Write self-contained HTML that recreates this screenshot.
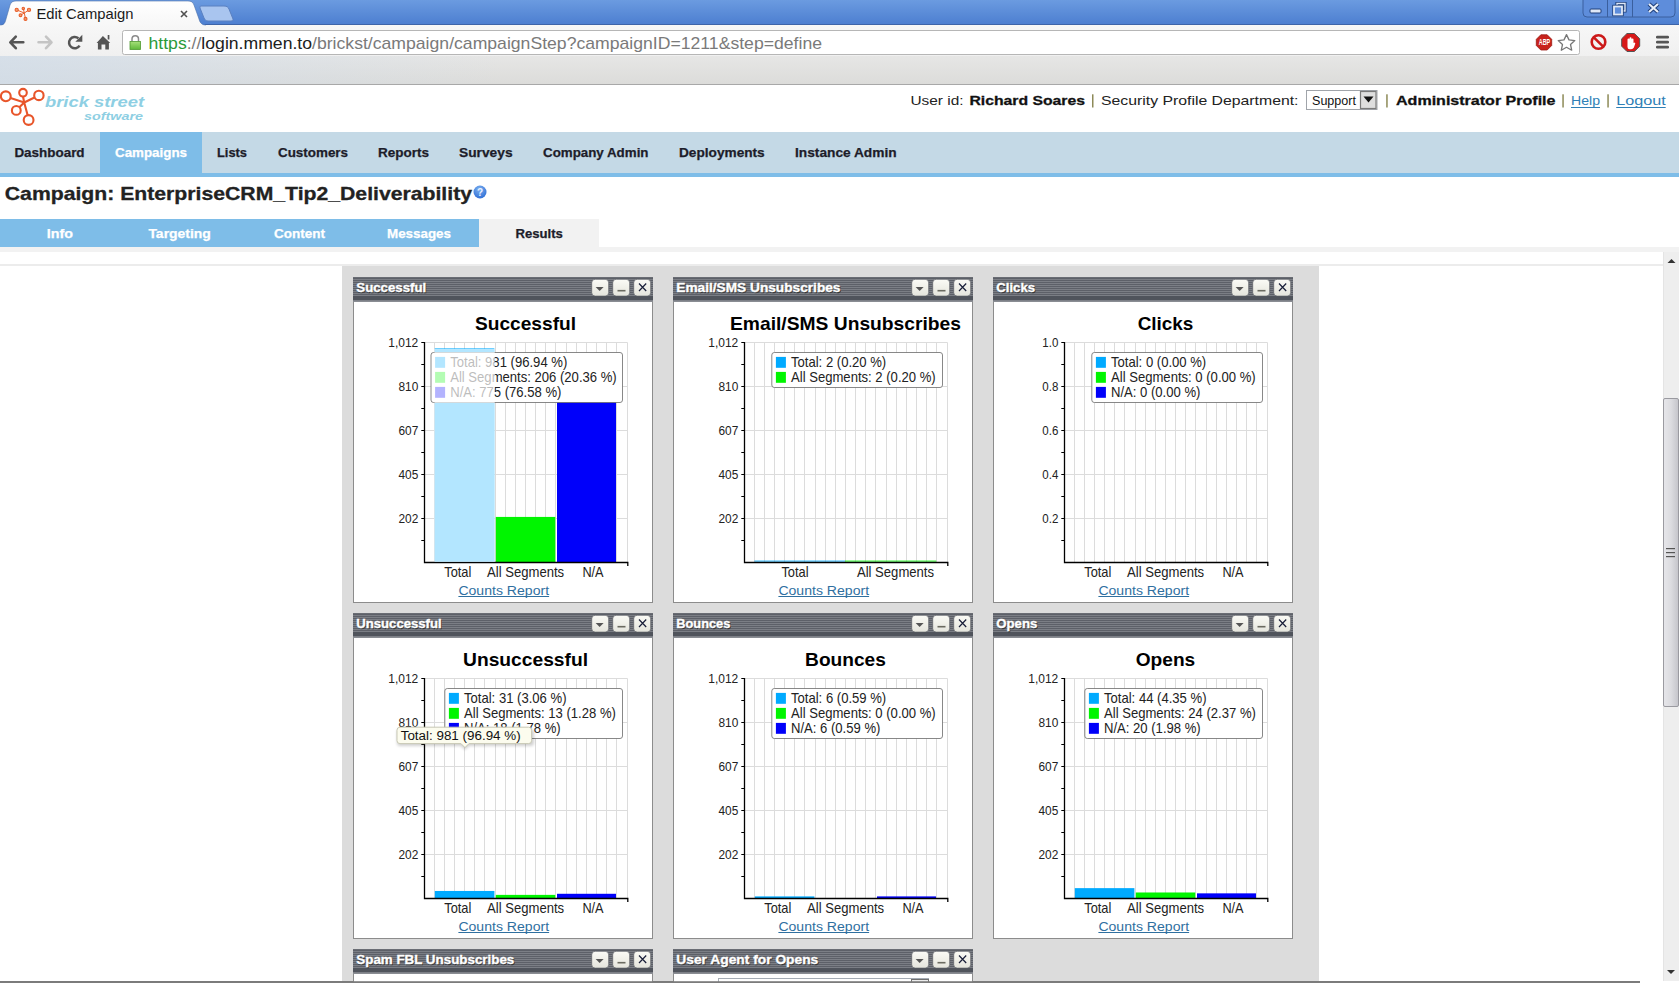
<!DOCTYPE html>
<html><head><meta charset="utf-8"><title>Edit Campaign</title>
<style>html,body{margin:0;padding:0;width:1679px;height:983px;overflow:hidden;background:#fff}svg{display:block}text{white-space:pre}</style>
</head><body>
<svg width="1679" height="983" viewBox="0 0 1679 983">
<defs>
<linearGradient id="tabbar" x1="0" y1="0" x2="0" y2="1"><stop offset="0" stop-color="#6b9be0"/><stop offset="1" stop-color="#4c7ed0"/></linearGradient>
<linearGradient id="tabg" x1="0" y1="0" x2="0" y2="1"><stop offset="0" stop-color="#ffffff"/><stop offset="1" stop-color="#f7f7f7"/></linearGradient>
<linearGradient id="toolg" x1="0" y1="0" x2="0" y2="1"><stop offset="0" stop-color="#f7f7f7"/><stop offset="1" stop-color="#f0f0f0"/></linearGradient>
<linearGradient id="bookg" x1="0" y1="0" x2="0" y2="1"><stop offset="0" stop-color="#e6e6e5"/><stop offset="1" stop-color="#dcdcda"/></linearGradient><linearGradient id="booktint" x1="0" y1="0" x2="1" y2="0"><stop offset="0" stop-color="#cfdcea" stop-opacity="0.7"/><stop offset="0.3" stop-color="#cfdcea" stop-opacity="0"/></linearGradient>
<linearGradient id="lockg" x1="0" y1="0" x2="0" y2="1"><stop offset="0" stop-color="#a6e07a"/><stop offset="1" stop-color="#5fb83a"/></linearGradient>
<pattern id="stripes" width="4" height="2" patternUnits="userSpaceOnUse"><rect width="4" height="1" fill="#5d6068"/><rect y="1" width="4" height="1" fill="#7b7e85"/></pattern>
<linearGradient id="btng" x1="0" y1="0" x2="0" y2="1"><stop offset="0" stop-color="#fbfbf6"/><stop offset="1" stop-color="#e4e4dc"/></linearGradient>
<linearGradient id="thumbg" x1="0" y1="0" x2="1" y2="0"><stop offset="0" stop-color="#e6e6ea"/><stop offset="0.5" stop-color="#dcdce0"/><stop offset="1" stop-color="#c4c4ca"/></linearGradient>
</defs>
<rect x="0" y="0" width="1679" height="25" fill="url(#tabbar)" />
<path d="M1583,0 v13 q0,4 4,4 h84 q4,0 4,-4 v-13" fill="#5e8ddb" stroke="#3a5f9e" stroke-width="1"/>
<line x1="1607.5" y1="0" x2="1607.5" y2="17" stroke="#3a5f9e" stroke-width="1" />
<line x1="1632.5" y1="0" x2="1632.5" y2="17" stroke="#3a5f9e" stroke-width="1" />
<rect x="1590" y="9" width="11" height="4" fill="#dfe8f7" stroke="#1f3f7a" stroke-width="1" rx="1"/>
<path d="M1617,3.5 h8 v7.5 h-8z" fill="none" stroke="#1f3f7a" stroke-width="3.2"/><path d="M1617,3.5 h8 v7.5 h-8z" fill="none" stroke="#dfe8f7" stroke-width="1.4"/>
<rect x="1614" y="6.5" width="8" height="8" fill="#5e8ddb" stroke="#1f3f7a" stroke-width="3.4"/><rect x="1614" y="6.5" width="8" height="8" fill="#5e8ddb" stroke="#dfe8f7" stroke-width="1.8"/>
<path d="M1649,4 l9,8 M1658,4 l-9,8" stroke="#1f3f7a" stroke-width="4.2"/><path d="M1649,4 l9,8 M1658,4 l-9,8" stroke="#e8eef8" stroke-width="2.2"/>
<rect x="0" y="25" width="1679" height="31" fill="url(#toolg)" />
<rect x="0" y="56" width="1679" height="28" fill="url(#bookg)" />
<rect x="0" y="56" width="1679" height="28" fill="url(#booktint)" />
<rect x="0" y="84" width="1679" height="1" fill="#a8a8a8" />
<line x1="205" y1="24.5" x2="1679" y2="24.5" stroke="#3d64a8" stroke-width="1" />
<path d="M0,25.5 C4,25.5 5,23 6,19 L10,5 C11,2 13,1 16,1 L188,1 C191,1 193,2 194,5 L199,19 C200,23 202,25 206,25.5 Z" fill="url(#tabg)"/>
<path d="M0,25 C4,25 5,23 6,19 L10,5 C11,2 13,1 16,1 L188,1 C191,1 193,2 194,5 L199,19 C200,23 202,25 206,25" fill="none" stroke="#4a6ea8" stroke-width="0.6"/>
<rect x="0" y="24.5" width="0.1" height="1" fill="#fff" />
<path d="M201,6 L224,6 C227,6 228,7 229,9 L233,19 C233,20 233,21 231,21 L208,21 C206,21 205,20 204,18 L200,8 C200,7 200,6 201,6Z" fill="#a9c5ef" stroke="#5a80c0" stroke-width="1"/>
<g stroke="#e8602c" fill="#f29a70" stroke-width="1.1"><path d="M16.7,9.9 L24.3,13 L23.3,8.4 M24.3,13 L29,9.9 M24.3,13 L20.5,15.2 M24.3,13 L25.5,18.9" fill="none" stroke-width="1"/><circle cx="16.7" cy="9.9" r="1.6"/><circle cx="23.3" cy="8.4" r="1.2"/><circle cx="29" cy="9.9" r="1.6"/><circle cx="20.5" cy="15.2" r="1.4"/><circle cx="25.5" cy="18.9" r="1.5"/></g>
<text x="36.5" y="18.8" font-family="Liberation Sans" font-size="14.8" font-weight="normal" fill="#1a1a1a" text-anchor="start" textLength="97" lengthAdjust="spacingAndGlyphs" >Edit Campaign</text>
<path d="M181,11 l6,6 M187,11 l-6,6" stroke="#505050" stroke-width="1.6"/>
<path d="M10.5,42.3 h12.8 M15.8,36.6 l-5.5,5.7 l5.5,5.9" fill="none" stroke="#555" stroke-width="2.6" stroke-linecap="round" stroke-linejoin="round"/>
<path d="M38.5,42.3 h12.5 M46,36.6 l5.5,5.7 l-5.5,5.9" fill="none" stroke="#c4c4c4" stroke-width="2.6" stroke-linecap="round" stroke-linejoin="round"/>
<path d="M78.4,38.2 A5.7,5.7 0 1 0 79.6,45.6" fill="none" stroke="#555" stroke-width="2.5"/><path d="M75.3,41.8 L82.3,41.8 L82.3,34.8Z" fill="#555"/>
<path d="M96.6,42.9 L102.9,36 L110.2,42.9 L108.9,42.9 L108.9,49.4 L105.3,49.4 L105.3,44.6 L101.5,44.6 L101.5,49.4 L97.9,49.4 L97.9,42.9Z" fill="#555"/><rect x="107.7" y="35" width="1.7" height="4.5" fill="#555"/>
<rect x="122.5" y="30.5" width="1457" height="24" fill="#ffffff" stroke="#b6b6b6" stroke-width="1" rx="2"/>
<path d="M132,41.5 v-2.6 a3.25,3.25 0 0 1 6.5,0 v2.6" fill="none" stroke="#8a8a8a" stroke-width="1.5"/>
<rect x="130" y="41.5" width="10.5" height="8" fill="url(#lockg)" stroke="#4f9a30" stroke-width="0.8"/>
<text x="148.5" y="48.5" font-family="Liberation Sans" font-size="17" textLength="673.5" lengthAdjust="spacingAndGlyphs"><tspan fill="#2a9a3a">https</tspan><tspan fill="#7a7a7a">://</tspan><tspan fill="#202020">login.mmen.to</tspan><tspan fill="#7a7a7a">/brickst/campaign/campaignStep?campaignID=1211&amp;step=define</tspan></text>
<path d="M1540.8,34.8 h6.4 l4.5,4.5 v6.2 l-4.5,4.5 h-6.4 l-4.5,-4.5 v-6.2z" fill="#c8231c" stroke="#9a1a14" stroke-width="0.8"/>
<text x="1544.5" y="44.7" font-family="Liberation Sans" font-size="8.6" font-weight="bold" fill="#fff" text-anchor="middle" textLength="11.4" lengthAdjust="spacingAndGlyphs" >ABP</text>
<path d="M1566.5,34.6 l2.5,5.3 5.8,0.7 -4.3,3.9 1.2,5.7 -5.2,-2.9 -5.2,2.9 1.2,-5.7 -4.3,-3.9 5.8,-0.7z" fill="#fff" stroke="#777" stroke-width="1.3" stroke-linejoin="round"/>
<circle cx="1598.5" cy="42" r="6.8" fill="#f3f3f3" stroke="#cc1a1a" stroke-width="2.6"/><path d="M1593.8,37.3 L1603.2,46.7" stroke="#cc1a1a" stroke-width="2.6"/>
<path d="M1627,33.5 h7.4 l5.3,5.3 v7.4 l-5.3,5.3 h-7.4 l-5.3,-5.3 v-7.4z" fill="#d81a1a" stroke="#555" stroke-width="1"/>
<path d="M1627.5,44 v-4.5 a1,1 0 0 1 2,0 v-1.2 a1,1 0 0 1 2,0 v1.2 a1,1 0 0 1 2,0 v3.5 a1,1 0 0 1 1.8,0.6 l-1.4,4 q-0.9,1.7 -2.8,1.7 h-1.5 q-2.1,0 -2.1,-2.3z" fill="#fff"/>
<rect x="1656" y="35.8" width="13" height="2.6" fill="#555" rx="1.2"/>
<rect x="1656" y="40.8" width="13" height="2.6" fill="#555" rx="1.2"/>
<rect x="1656" y="45.8" width="13" height="2.6" fill="#555" rx="1.2"/>
<g stroke="#e8552a" fill="none" stroke-width="2.1"><circle cx="5.8" cy="96.3" r="4.9"/><circle cx="23" cy="92.7" r="3.8"/><circle cx="38.9" cy="95.4" r="4.7"/><circle cx="16.3" cy="110.4" r="4.4"/><circle cx="28.6" cy="120" r="4.9"/><path d="M10.5,98 L24.2,102.5 L23,96.5 M24.2,102.5 L34.5,97.5 M24.2,102.5 L19.3,107.3 M24.2,102.5 L27.6,115"/></g>
<text x="45" y="107.3" font-family="Liberation Sans" font-size="15.5" font-weight="bold" fill="#8ecfe3" text-anchor="start" textLength="99" lengthAdjust="spacingAndGlyphs" font-style="italic">brick street</text>
<text x="84" y="119.7" font-family="Liberation Sans" font-size="11" font-weight="bold" fill="#8ecfe3" text-anchor="start" textLength="59" lengthAdjust="spacingAndGlyphs" font-style="italic">software</text>
<text x="910.5" y="105" font-family="Liberation Sans" font-size="13" font-weight="normal" fill="#222" text-anchor="start" textLength="53" lengthAdjust="spacingAndGlyphs" >User id:</text>
<text x="969.5" y="105" font-family="Liberation Sans" font-size="13" font-weight="bold" fill="#111" text-anchor="start" textLength="115.5" lengthAdjust="spacingAndGlyphs" stroke="#111" stroke-width="0.3">Richard Soares</text>
<rect x="1092.0" y="94.3" width="1.5" height="13.2" fill="#8d8a58" />
<text x="1101" y="105" font-family="Liberation Sans" font-size="13" font-weight="normal" fill="#222" text-anchor="start" textLength="197.5" lengthAdjust="spacingAndGlyphs" >Security Profile Department:</text>
<rect x="1306.5" y="90.5" width="70.5" height="19" fill="#fff" stroke="#a0a4aa" stroke-width="1"/>
<text x="1312" y="105" font-family="Liberation Sans" font-size="12.5" font-weight="normal" fill="#111" text-anchor="start" textLength="44" lengthAdjust="spacingAndGlyphs" >Support</text>
<rect x="1360.5" y="91.5" width="15.5" height="17" fill="#dedede" stroke="#7a7a7a" stroke-width="1.2"/>
<path d="M1363.5,96.5 h10 l-5,6z" fill="#111"/>
<rect x="1386.2" y="94.3" width="1.5" height="13.2" fill="#8d8a58" />
<text x="1396" y="105" font-family="Liberation Sans" font-size="13" font-weight="bold" fill="#111" text-anchor="start" textLength="159.5" lengthAdjust="spacingAndGlyphs" stroke="#111" stroke-width="0.3">Administrator Profile</text>
<rect x="1562.3" y="94.3" width="1.5" height="13.2" fill="#8d8a58" />
<text x="1571" y="105" font-family="Liberation Sans" font-size="13" font-weight="normal" fill="#2f7fb6" text-anchor="start" textLength="29" lengthAdjust="spacingAndGlyphs" >Help</text>
<rect x="1571" y="107" width="29" height="1" fill="#2f7fb6" />
<rect x="1607.3" y="94.3" width="1.5" height="13.2" fill="#8d8a58" />
<text x="1616.2" y="105" font-family="Liberation Sans" font-size="13" font-weight="normal" fill="#2f7fb6" text-anchor="start" textLength="49.5" lengthAdjust="spacingAndGlyphs" >Logout</text>
<rect x="1616.2" y="107" width="49.5" height="1" fill="#2f7fb6" />
<rect x="0" y="132" width="1679" height="41" fill="#c4d9e6" />
<rect x="0" y="173" width="1679" height="4" fill="#7ebde8" />
<rect x="100" y="132" width="102" height="41" fill="#7ebde8" />
<text x="14.4" y="157" font-family="Liberation Sans" font-size="12.5" font-weight="bold" fill="#1d1d2a" text-anchor="start" textLength="70.2" lengthAdjust="spacingAndGlyphs" stroke="#1d1d2a" stroke-width="0.25">Dashboard</text>
<text x="115" y="157" font-family="Liberation Sans" font-size="12.5" font-weight="bold" fill="#fff" text-anchor="start" textLength="72" lengthAdjust="spacingAndGlyphs" stroke="#fff" stroke-width="0.25">Campaigns</text>
<text x="217" y="157" font-family="Liberation Sans" font-size="12.5" font-weight="bold" fill="#1d1d2a" text-anchor="start" textLength="30" lengthAdjust="spacingAndGlyphs" stroke="#1d1d2a" stroke-width="0.25">Lists</text>
<text x="278" y="157" font-family="Liberation Sans" font-size="12.5" font-weight="bold" fill="#1d1d2a" text-anchor="start" textLength="70" lengthAdjust="spacingAndGlyphs" stroke="#1d1d2a" stroke-width="0.25">Customers</text>
<text x="378" y="157" font-family="Liberation Sans" font-size="12.5" font-weight="bold" fill="#1d1d2a" text-anchor="start" textLength="51" lengthAdjust="spacingAndGlyphs" stroke="#1d1d2a" stroke-width="0.25">Reports</text>
<text x="459" y="157" font-family="Liberation Sans" font-size="12.5" font-weight="bold" fill="#1d1d2a" text-anchor="start" textLength="53.6" lengthAdjust="spacingAndGlyphs" stroke="#1d1d2a" stroke-width="0.25">Surveys</text>
<text x="543" y="157" font-family="Liberation Sans" font-size="12.5" font-weight="bold" fill="#1d1d2a" text-anchor="start" textLength="105.5" lengthAdjust="spacingAndGlyphs" stroke="#1d1d2a" stroke-width="0.25">Company Admin</text>
<text x="679" y="157" font-family="Liberation Sans" font-size="12.5" font-weight="bold" fill="#1d1d2a" text-anchor="start" textLength="85.7" lengthAdjust="spacingAndGlyphs" stroke="#1d1d2a" stroke-width="0.25">Deployments</text>
<text x="795" y="157" font-family="Liberation Sans" font-size="12.5" font-weight="bold" fill="#1d1d2a" text-anchor="start" textLength="101.6" lengthAdjust="spacingAndGlyphs" stroke="#1d1d2a" stroke-width="0.25">Instance Admin</text>
<text x="4.8" y="200" font-family="Liberation Sans" font-size="18.5" font-weight="bold" fill="#222" text-anchor="start" textLength="467.2" lengthAdjust="spacingAndGlyphs" stroke="#222" stroke-width="0.3">Campaign: EnterpriseCRM_Tip2_Deliverability</text>
<defs><radialGradient id="helpg" cx="0.45" cy="0.3" r="0.7"><stop offset="0" stop-color="#7fb2f0"/><stop offset="1" stop-color="#2f6fd6"/></radialGradient></defs>
<circle cx="480" cy="192" r="6.5" fill="url(#helpg)"/>
<text x="480" y="196.2" font-family="Liberation Sans" font-size="10" font-weight="bold" fill="#eaf2ff" text-anchor="middle" >?</text>
<rect x="0" y="219" width="479" height="28" fill="#7ebde8" />
<rect x="479" y="219" width="120" height="28" fill="#f2f2f2" />
<text x="46.7" y="237.8" font-family="Liberation Sans" font-size="12.5" font-weight="bold" fill="#fff" text-anchor="start" textLength="26.2" lengthAdjust="spacingAndGlyphs" stroke="#fff" stroke-width="0.25">Info</text>
<text x="148.4" y="237.8" font-family="Liberation Sans" font-size="12.5" font-weight="bold" fill="#fff" text-anchor="start" textLength="62.5" lengthAdjust="spacingAndGlyphs" stroke="#fff" stroke-width="0.25">Targeting</text>
<text x="274" y="237.8" font-family="Liberation Sans" font-size="12.5" font-weight="bold" fill="#fff" text-anchor="start" textLength="51" lengthAdjust="spacingAndGlyphs" stroke="#fff" stroke-width="0.25">Content</text>
<text x="387" y="237.8" font-family="Liberation Sans" font-size="12.5" font-weight="bold" fill="#fff" text-anchor="start" textLength="64" lengthAdjust="spacingAndGlyphs" stroke="#fff" stroke-width="0.25">Messages</text>
<text x="515.5" y="237.8" font-family="Liberation Sans" font-size="12.5" font-weight="bold" fill="#1d1d2a" text-anchor="start" textLength="47.3" lengthAdjust="spacingAndGlyphs" stroke="#1d1d2a" stroke-width="0.25">Results</text>
<rect x="0" y="247" width="1679" height="5" fill="#f2f2f2" />
<rect x="0" y="264" width="1663" height="2" fill="#ececec" />
<rect x="342" y="266" width="977" height="717" fill="#dcdcdc" />
<rect x="1663" y="252" width="16" height="729" fill="#eeeeee" />
<rect x="1663" y="252" width="1" height="729" fill="#e4e4e4" />
<path d="M1667.5,263 l4,-4 l4,4z" fill="#333"/>
<path d="M1667,970 l4,4 l4,-4z" fill="#333"/>
<rect x="1663.5" y="398.5" width="15" height="308" fill="url(#thumbg)" stroke="#9a9aa0" stroke-width="1" rx="1.5"/>
<rect x="1666" y="548.0" width="9" height="1.2" fill="#555" />
<rect x="1666" y="552.0" width="9" height="1.2" fill="#555" />
<rect x="1666" y="556.0" width="9" height="1.2" fill="#555" />
<rect x="0" y="981" width="1640" height="2" fill="#7c7c7c" />
<rect x="353" y="277" width="300" height="25" fill="url(#stripes)" />
<rect x="353" y="277" width="300" height="1" fill="#6a6d74" />
<rect x="353" y="296" width="300" height="4" fill="#50545c" />
<rect x="353" y="300" width="300" height="1" fill="#7d8087" />
<rect x="353" y="301" width="300" height="1" fill="#8a8d93" />
<text x="357" y="292.7" font-family="Liberation Sans" font-size="12.5" font-weight="bold" fill="#2a2c30" text-anchor="start" textLength="70" lengthAdjust="spacingAndGlyphs" opacity="0.8" stroke="#2a2c30" stroke-width="0.5">Successful</text>
<text x="356.3" y="291.7" font-family="Liberation Sans" font-size="12.5" font-weight="bold" fill="#ffffff" text-anchor="start" textLength="70" lengthAdjust="spacingAndGlyphs" stroke="#ffffff" stroke-width="0.35">Successful</text>
<rect x="591.7" y="279.3" width="17" height="16.8" fill="url(#btng)" rx="3.5" stroke="#5a5d64" stroke-width="0.7"/>
<path d="M595.6,287 h8 l-4,4z" fill="#555"/>
<rect x="612.7" y="279.3" width="17" height="16.8" fill="url(#btng)" rx="3.5" stroke="#5a5d64" stroke-width="0.7"/>
<rect x="617.5" y="289.9" width="8" height="1.6" fill="#6a6a60" />
<rect x="633.7" y="279.3" width="17" height="16.8" fill="url(#btng)" rx="3.5" stroke="#5a5d64" stroke-width="0.7"/>
<path d="M639,283.5 l7.2,7.5 M646.2,283.5 l-7.2,7.5" stroke="#1a1f3a" stroke-width="1.2"/>
<rect x="353" y="302" width="300" height="301" fill="#8c8c8c" />
<rect x="354" y="302" width="298" height="300" fill="#ffffff" />
<rect x="673" y="277" width="300" height="25" fill="url(#stripes)" />
<rect x="673" y="277" width="300" height="1" fill="#6a6d74" />
<rect x="673" y="296" width="300" height="4" fill="#50545c" />
<rect x="673" y="300" width="300" height="1" fill="#7d8087" />
<rect x="673" y="301" width="300" height="1" fill="#8a8d93" />
<text x="677" y="292.7" font-family="Liberation Sans" font-size="12.5" font-weight="bold" fill="#2a2c30" text-anchor="start" textLength="164.2" lengthAdjust="spacingAndGlyphs" opacity="0.8" stroke="#2a2c30" stroke-width="0.5">Email/SMS Unsubscribes</text>
<text x="676.3" y="291.7" font-family="Liberation Sans" font-size="12.5" font-weight="bold" fill="#ffffff" text-anchor="start" textLength="164.2" lengthAdjust="spacingAndGlyphs" stroke="#ffffff" stroke-width="0.35">Email/SMS Unsubscribes</text>
<rect x="911.7" y="279.3" width="17" height="16.8" fill="url(#btng)" rx="3.5" stroke="#5a5d64" stroke-width="0.7"/>
<path d="M915.6,287 h8 l-4,4z" fill="#555"/>
<rect x="932.7" y="279.3" width="17" height="16.8" fill="url(#btng)" rx="3.5" stroke="#5a5d64" stroke-width="0.7"/>
<rect x="937.5" y="289.9" width="8" height="1.6" fill="#6a6a60" />
<rect x="953.7" y="279.3" width="17" height="16.8" fill="url(#btng)" rx="3.5" stroke="#5a5d64" stroke-width="0.7"/>
<path d="M959,283.5 l7.2,7.5 M966.2,283.5 l-7.2,7.5" stroke="#1a1f3a" stroke-width="1.2"/>
<rect x="673" y="302" width="300" height="301" fill="#8c8c8c" />
<rect x="674" y="302" width="298" height="300" fill="#ffffff" />
<rect x="993" y="277" width="300" height="25" fill="url(#stripes)" />
<rect x="993" y="277" width="300" height="1" fill="#6a6d74" />
<rect x="993" y="296" width="300" height="4" fill="#50545c" />
<rect x="993" y="300" width="300" height="1" fill="#7d8087" />
<rect x="993" y="301" width="300" height="1" fill="#8a8d93" />
<text x="997" y="292.7" font-family="Liberation Sans" font-size="12.5" font-weight="bold" fill="#2a2c30" text-anchor="start" textLength="38.7" lengthAdjust="spacingAndGlyphs" opacity="0.8" stroke="#2a2c30" stroke-width="0.5">Clicks</text>
<text x="996.3" y="291.7" font-family="Liberation Sans" font-size="12.5" font-weight="bold" fill="#ffffff" text-anchor="start" textLength="38.7" lengthAdjust="spacingAndGlyphs" stroke="#ffffff" stroke-width="0.35">Clicks</text>
<rect x="1231.7" y="279.3" width="17" height="16.8" fill="url(#btng)" rx="3.5" stroke="#5a5d64" stroke-width="0.7"/>
<path d="M1235.6,287 h8 l-4,4z" fill="#555"/>
<rect x="1252.7" y="279.3" width="17" height="16.8" fill="url(#btng)" rx="3.5" stroke="#5a5d64" stroke-width="0.7"/>
<rect x="1257.5" y="289.9" width="8" height="1.6" fill="#6a6a60" />
<rect x="1273.7" y="279.3" width="17" height="16.8" fill="url(#btng)" rx="3.5" stroke="#5a5d64" stroke-width="0.7"/>
<path d="M1279,283.5 l7.2,7.5 M1286.2,283.5 l-7.2,7.5" stroke="#1a1f3a" stroke-width="1.2"/>
<rect x="993" y="302" width="300" height="301" fill="#8c8c8c" />
<rect x="994" y="302" width="298" height="300" fill="#ffffff" />
<text x="525.5" y="329.6" font-family="Liberation Sans" font-size="19" font-weight="bold" fill="#000" text-anchor="middle" textLength="101" lengthAdjust="spacingAndGlyphs" >Successful</text>
<path d="M434.50,342.5 V562.5 M444.50,342.5 V562.5 M454.50,342.5 V562.5 M464.50,342.5 V562.5 M474.50,342.5 V562.5 M484.50,342.5 V562.5 M495.50,342.5 V562.5 M505.50,342.5 V562.5 M515.50,342.5 V562.5 M525.50,342.5 V562.5 M535.50,342.5 V562.5 M545.50,342.5 V562.5 M555.50,342.5 V562.5 M566.50,342.5 V562.5 M576.50,342.5 V562.5 M586.50,342.5 V562.5 M596.50,342.5 V562.5 M606.50,342.5 V562.5 M616.50,342.5 V562.5 M627.50,342.5 V562.5 M424.5,342.5 H627.5 M424.5,386.5 H627.5 M424.5,430.5 H627.5 M424.5,474.5 H627.5 M424.5,518.5 H627.5" stroke="#dcdcdc" stroke-width="1" fill="none"/>
<rect x="434.8" y="348.43913043478256" width="59.60000000000001" height="214.06086956521742" fill="#00aaff" />
<rect x="495.8" y="516.9173913043478" width="59.5" height="45.58260869565217" fill="#00f500" />
<rect x="557" y="393.2217391304348" width="59" height="169.27826086956523" fill="#0000fa" />
<path d="M424.5,342.0 V562.5 H627.8 V566.0" stroke="#000" stroke-width="1.3" fill="none"/>
<path d="M421.3,342.5 H424.5 M421.3,364.5 H424.5 M421.3,386.5 H424.5 M421.3,408.5 H424.5 M421.3,430.5 H424.5 M421.3,452.5 H424.5 M421.3,474.5 H424.5 M421.3,496.5 H424.5 M421.3,518.5 H424.5 M421.3,540.5 H424.5" stroke="#000" stroke-width="1.2"/>
<text x="418.3" y="347.09999999999997" font-family="Liberation Sans" font-size="13.6" font-weight="normal" fill="#222" text-anchor="end" textLength="30" lengthAdjust="spacingAndGlyphs" >1,012</text>
<text x="418.3" y="391.09999999999997" font-family="Liberation Sans" font-size="13.6" font-weight="normal" fill="#222" text-anchor="end" textLength="19.8" lengthAdjust="spacingAndGlyphs" >810</text>
<text x="418.3" y="435.09999999999997" font-family="Liberation Sans" font-size="13.6" font-weight="normal" fill="#222" text-anchor="end" textLength="19.8" lengthAdjust="spacingAndGlyphs" >607</text>
<text x="418.3" y="479.09999999999997" font-family="Liberation Sans" font-size="13.6" font-weight="normal" fill="#222" text-anchor="end" textLength="19.8" lengthAdjust="spacingAndGlyphs" >405</text>
<text x="418.3" y="523.1" font-family="Liberation Sans" font-size="13.6" font-weight="normal" fill="#222" text-anchor="end" textLength="19.8" lengthAdjust="spacingAndGlyphs" >202</text>
<text x="457.8" y="576.7" font-family="Liberation Sans" font-size="14.2" font-weight="normal" fill="#222" text-anchor="middle" textLength="27.2" lengthAdjust="spacingAndGlyphs" >Total</text>
<text x="525.6" y="576.7" font-family="Liberation Sans" font-size="14.2" font-weight="normal" fill="#222" text-anchor="middle" textLength="77.1" lengthAdjust="spacingAndGlyphs" >All Segments</text>
<text x="593" y="576.7" font-family="Liberation Sans" font-size="14.2" font-weight="normal" fill="#222" text-anchor="middle" textLength="21.2" lengthAdjust="spacingAndGlyphs" >N/A</text>
<rect x="431.0" y="352.5" width="191.5" height="50" rx="2.5" fill="#fff" stroke="#6a6a6a" stroke-width="0.8"/>
<rect x="435.1" y="356.9" width="10" height="10.9" fill="#00aaff" />
<text x="450.2" y="366.9" font-family="Liberation Sans" font-size="14.2" font-weight="normal" fill="#222" text-anchor="start" textLength="117.1" lengthAdjust="spacingAndGlyphs" >Total: 981 (96.94 %)</text>
<rect x="435.1" y="371.9" width="10" height="10.9" fill="#00f500" />
<text x="450.2" y="381.9" font-family="Liberation Sans" font-size="14.2" font-weight="normal" fill="#222" text-anchor="start" textLength="166.5" lengthAdjust="spacingAndGlyphs" >All Segments: 206 (20.36 %)</text>
<rect x="435.1" y="386.9" width="10" height="10.9" fill="#0000fa" />
<text x="450.2" y="396.9" font-family="Liberation Sans" font-size="14.2" font-weight="normal" fill="#222" text-anchor="start" textLength="111.2" lengthAdjust="spacingAndGlyphs" >N/A: 775 (76.58 %)</text>
<text x="458.4" y="594.8" font-family="Liberation Sans" font-size="12.5" font-weight="normal" fill="#2f6f9f" text-anchor="start" textLength="90.7" lengthAdjust="spacingAndGlyphs" >Counts Report</text>
<rect x="458.4" y="596" width="90.7" height="1" fill="#2f6f9f" />
<text x="845.5" y="329.6" font-family="Liberation Sans" font-size="19" font-weight="bold" fill="#000" text-anchor="middle" textLength="231" lengthAdjust="spacingAndGlyphs" >Email/SMS Unsubscribes</text>
<path d="M754.50,342.5 V562.5 M764.50,342.5 V562.5 M774.50,342.5 V562.5 M784.50,342.5 V562.5 M794.50,342.5 V562.5 M804.50,342.5 V562.5 M815.50,342.5 V562.5 M825.50,342.5 V562.5 M835.50,342.5 V562.5 M845.50,342.5 V562.5 M855.50,342.5 V562.5 M865.50,342.5 V562.5 M875.50,342.5 V562.5 M886.50,342.5 V562.5 M896.50,342.5 V562.5 M906.50,342.5 V562.5 M916.50,342.5 V562.5 M926.50,342.5 V562.5 M936.50,342.5 V562.5 M947.50,342.5 V562.5 M744.5,342.5 H947.5 M744.5,386.5 H947.5 M744.5,430.5 H947.5 M744.5,474.5 H947.5 M744.5,518.5 H947.5" stroke="#dcdcdc" stroke-width="1" fill="none"/>
<rect x="754.4" y="560.3" width="90.6" height="2" fill="#00aaff" opacity="0.55"/>
<rect x="845" y="560.3" width="91.30000000000001" height="2" fill="#00f500" opacity="0.55"/>
<path d="M744.5,342.0 V562.5 H947.8 V566.0" stroke="#000" stroke-width="1.3" fill="none"/>
<path d="M741.3,342.5 H744.5 M741.3,364.5 H744.5 M741.3,386.5 H744.5 M741.3,408.5 H744.5 M741.3,430.5 H744.5 M741.3,452.5 H744.5 M741.3,474.5 H744.5 M741.3,496.5 H744.5 M741.3,518.5 H744.5 M741.3,540.5 H744.5" stroke="#000" stroke-width="1.2"/>
<text x="738.3" y="347.09999999999997" font-family="Liberation Sans" font-size="13.6" font-weight="normal" fill="#222" text-anchor="end" textLength="30" lengthAdjust="spacingAndGlyphs" >1,012</text>
<text x="738.3" y="391.09999999999997" font-family="Liberation Sans" font-size="13.6" font-weight="normal" fill="#222" text-anchor="end" textLength="19.8" lengthAdjust="spacingAndGlyphs" >810</text>
<text x="738.3" y="435.09999999999997" font-family="Liberation Sans" font-size="13.6" font-weight="normal" fill="#222" text-anchor="end" textLength="19.8" lengthAdjust="spacingAndGlyphs" >607</text>
<text x="738.3" y="479.09999999999997" font-family="Liberation Sans" font-size="13.6" font-weight="normal" fill="#222" text-anchor="end" textLength="19.8" lengthAdjust="spacingAndGlyphs" >405</text>
<text x="738.3" y="523.1" font-family="Liberation Sans" font-size="13.6" font-weight="normal" fill="#222" text-anchor="end" textLength="19.8" lengthAdjust="spacingAndGlyphs" >202</text>
<text x="795" y="576.7" font-family="Liberation Sans" font-size="14.2" font-weight="normal" fill="#222" text-anchor="middle" textLength="27.2" lengthAdjust="spacingAndGlyphs" >Total</text>
<text x="895.5" y="576.7" font-family="Liberation Sans" font-size="14.2" font-weight="normal" fill="#222" text-anchor="middle" textLength="77.1" lengthAdjust="spacingAndGlyphs" >All Segments</text>
<rect x="771.8" y="352.5" width="170.7" height="35" rx="2.5" fill="#fff" stroke="#6a6a6a" stroke-width="0.8"/>
<rect x="775.8999999999999" y="356.9" width="10" height="10.9" fill="#00aaff" />
<text x="790.9999999999999" y="366.9" font-family="Liberation Sans" font-size="14.2" font-weight="normal" fill="#222" text-anchor="start" textLength="95.2" lengthAdjust="spacingAndGlyphs" >Total: 2 (0.20 %)</text>
<rect x="775.8999999999999" y="371.9" width="10" height="10.9" fill="#00f500" />
<text x="790.9999999999999" y="381.9" font-family="Liberation Sans" font-size="14.2" font-weight="normal" fill="#222" text-anchor="start" textLength="144.7" lengthAdjust="spacingAndGlyphs" >All Segments: 2 (0.20 %)</text>
<text x="778.4" y="594.8" font-family="Liberation Sans" font-size="12.5" font-weight="normal" fill="#2f6f9f" text-anchor="start" textLength="90.7" lengthAdjust="spacingAndGlyphs" >Counts Report</text>
<rect x="778.4" y="596" width="90.7" height="1" fill="#2f6f9f" />
<text x="1165.5" y="329.6" font-family="Liberation Sans" font-size="19" font-weight="bold" fill="#000" text-anchor="middle" textLength="55.7" lengthAdjust="spacingAndGlyphs" >Clicks</text>
<path d="M1074.50,342.5 V562.5 M1084.50,342.5 V562.5 M1094.50,342.5 V562.5 M1104.50,342.5 V562.5 M1114.50,342.5 V562.5 M1124.50,342.5 V562.5 M1135.50,342.5 V562.5 M1145.50,342.5 V562.5 M1155.50,342.5 V562.5 M1165.50,342.5 V562.5 M1175.50,342.5 V562.5 M1185.50,342.5 V562.5 M1195.50,342.5 V562.5 M1206.50,342.5 V562.5 M1216.50,342.5 V562.5 M1226.50,342.5 V562.5 M1236.50,342.5 V562.5 M1246.50,342.5 V562.5 M1256.50,342.5 V562.5 M1267.50,342.5 V562.5 M1064.5,342.5 H1267.5 M1064.5,386.5 H1267.5 M1064.5,430.5 H1267.5 M1064.5,474.5 H1267.5 M1064.5,518.5 H1267.5" stroke="#dcdcdc" stroke-width="1" fill="none"/>
<path d="M1064.5,342.0 V562.5 H1267.8 V566.0" stroke="#000" stroke-width="1.3" fill="none"/>
<path d="M1061.3,342.5 H1064.5 M1061.3,364.5 H1064.5 M1061.3,386.5 H1064.5 M1061.3,408.5 H1064.5 M1061.3,430.5 H1064.5 M1061.3,452.5 H1064.5 M1061.3,474.5 H1064.5 M1061.3,496.5 H1064.5 M1061.3,518.5 H1064.5 M1061.3,540.5 H1064.5" stroke="#000" stroke-width="1.2"/>
<text x="1058.3" y="347.09999999999997" font-family="Liberation Sans" font-size="13.6" font-weight="normal" fill="#222" text-anchor="end" textLength="16" lengthAdjust="spacingAndGlyphs" >1.0</text>
<text x="1058.3" y="391.09999999999997" font-family="Liberation Sans" font-size="13.6" font-weight="normal" fill="#222" text-anchor="end" textLength="16" lengthAdjust="spacingAndGlyphs" >0.8</text>
<text x="1058.3" y="435.09999999999997" font-family="Liberation Sans" font-size="13.6" font-weight="normal" fill="#222" text-anchor="end" textLength="16" lengthAdjust="spacingAndGlyphs" >0.6</text>
<text x="1058.3" y="479.09999999999997" font-family="Liberation Sans" font-size="13.6" font-weight="normal" fill="#222" text-anchor="end" textLength="16" lengthAdjust="spacingAndGlyphs" >0.4</text>
<text x="1058.3" y="523.1" font-family="Liberation Sans" font-size="13.6" font-weight="normal" fill="#222" text-anchor="end" textLength="16" lengthAdjust="spacingAndGlyphs" >0.2</text>
<text x="1097.8" y="576.7" font-family="Liberation Sans" font-size="14.2" font-weight="normal" fill="#222" text-anchor="middle" textLength="27.2" lengthAdjust="spacingAndGlyphs" >Total</text>
<text x="1165.6" y="576.7" font-family="Liberation Sans" font-size="14.2" font-weight="normal" fill="#222" text-anchor="middle" textLength="77.1" lengthAdjust="spacingAndGlyphs" >All Segments</text>
<text x="1233" y="576.7" font-family="Liberation Sans" font-size="14.2" font-weight="normal" fill="#222" text-anchor="middle" textLength="21.2" lengthAdjust="spacingAndGlyphs" >N/A</text>
<rect x="1091.8" y="352.5" width="170.7" height="50" rx="2.5" fill="#fff" stroke="#6a6a6a" stroke-width="0.8"/>
<rect x="1095.8999999999999" y="356.9" width="10" height="10.9" fill="#00aaff" />
<text x="1111.0" y="366.9" font-family="Liberation Sans" font-size="14.2" font-weight="normal" fill="#222" text-anchor="start" textLength="95.2" lengthAdjust="spacingAndGlyphs" >Total: 0 (0.00 %)</text>
<rect x="1095.8999999999999" y="371.9" width="10" height="10.9" fill="#00f500" />
<text x="1111.0" y="381.9" font-family="Liberation Sans" font-size="14.2" font-weight="normal" fill="#222" text-anchor="start" textLength="144.7" lengthAdjust="spacingAndGlyphs" >All Segments: 0 (0.00 %)</text>
<rect x="1095.8999999999999" y="386.9" width="10" height="10.9" fill="#0000fa" />
<text x="1111.0" y="396.9" font-family="Liberation Sans" font-size="14.2" font-weight="normal" fill="#222" text-anchor="start" textLength="89.4" lengthAdjust="spacingAndGlyphs" >N/A: 0 (0.00 %)</text>
<text x="1098.4" y="594.8" font-family="Liberation Sans" font-size="12.5" font-weight="normal" fill="#2f6f9f" text-anchor="start" textLength="90.7" lengthAdjust="spacingAndGlyphs" >Counts Report</text>
<rect x="1098.4" y="596" width="90.7" height="1" fill="#2f6f9f" />
<rect x="353" y="613" width="300" height="25" fill="url(#stripes)" />
<rect x="353" y="613" width="300" height="1" fill="#6a6d74" />
<rect x="353" y="632" width="300" height="4" fill="#50545c" />
<rect x="353" y="636" width="300" height="1" fill="#7d8087" />
<rect x="353" y="637" width="300" height="1" fill="#8a8d93" />
<text x="357" y="628.7" font-family="Liberation Sans" font-size="12.5" font-weight="bold" fill="#2a2c30" text-anchor="start" textLength="85.3" lengthAdjust="spacingAndGlyphs" opacity="0.8" stroke="#2a2c30" stroke-width="0.5">Unsuccessful</text>
<text x="356.3" y="627.7" font-family="Liberation Sans" font-size="12.5" font-weight="bold" fill="#ffffff" text-anchor="start" textLength="85.3" lengthAdjust="spacingAndGlyphs" stroke="#ffffff" stroke-width="0.35">Unsuccessful</text>
<rect x="591.7" y="615.3" width="17" height="16.8" fill="url(#btng)" rx="3.5" stroke="#5a5d64" stroke-width="0.7"/>
<path d="M595.6,623 h8 l-4,4z" fill="#555"/>
<rect x="612.7" y="615.3" width="17" height="16.8" fill="url(#btng)" rx="3.5" stroke="#5a5d64" stroke-width="0.7"/>
<rect x="617.5" y="625.9" width="8" height="1.6" fill="#6a6a60" />
<rect x="633.7" y="615.3" width="17" height="16.8" fill="url(#btng)" rx="3.5" stroke="#5a5d64" stroke-width="0.7"/>
<path d="M639,619.5 l7.2,7.5 M646.2,619.5 l-7.2,7.5" stroke="#1a1f3a" stroke-width="1.2"/>
<rect x="353" y="638" width="300" height="301" fill="#8c8c8c" />
<rect x="354" y="638" width="298" height="300" fill="#ffffff" />
<rect x="673" y="613" width="300" height="25" fill="url(#stripes)" />
<rect x="673" y="613" width="300" height="1" fill="#6a6d74" />
<rect x="673" y="632" width="300" height="4" fill="#50545c" />
<rect x="673" y="636" width="300" height="1" fill="#7d8087" />
<rect x="673" y="637" width="300" height="1" fill="#8a8d93" />
<text x="677" y="628.7" font-family="Liberation Sans" font-size="12.5" font-weight="bold" fill="#2a2c30" text-anchor="start" textLength="54" lengthAdjust="spacingAndGlyphs" opacity="0.8" stroke="#2a2c30" stroke-width="0.5">Bounces</text>
<text x="676.3" y="627.7" font-family="Liberation Sans" font-size="12.5" font-weight="bold" fill="#ffffff" text-anchor="start" textLength="54" lengthAdjust="spacingAndGlyphs" stroke="#ffffff" stroke-width="0.35">Bounces</text>
<rect x="911.7" y="615.3" width="17" height="16.8" fill="url(#btng)" rx="3.5" stroke="#5a5d64" stroke-width="0.7"/>
<path d="M915.6,623 h8 l-4,4z" fill="#555"/>
<rect x="932.7" y="615.3" width="17" height="16.8" fill="url(#btng)" rx="3.5" stroke="#5a5d64" stroke-width="0.7"/>
<rect x="937.5" y="625.9" width="8" height="1.6" fill="#6a6a60" />
<rect x="953.7" y="615.3" width="17" height="16.8" fill="url(#btng)" rx="3.5" stroke="#5a5d64" stroke-width="0.7"/>
<path d="M959,619.5 l7.2,7.5 M966.2,619.5 l-7.2,7.5" stroke="#1a1f3a" stroke-width="1.2"/>
<rect x="673" y="638" width="300" height="301" fill="#8c8c8c" />
<rect x="674" y="638" width="298" height="300" fill="#ffffff" />
<rect x="993" y="613" width="300" height="25" fill="url(#stripes)" />
<rect x="993" y="613" width="300" height="1" fill="#6a6d74" />
<rect x="993" y="632" width="300" height="4" fill="#50545c" />
<rect x="993" y="636" width="300" height="1" fill="#7d8087" />
<rect x="993" y="637" width="300" height="1" fill="#8a8d93" />
<text x="997" y="628.7" font-family="Liberation Sans" font-size="12.5" font-weight="bold" fill="#2a2c30" text-anchor="start" textLength="41" lengthAdjust="spacingAndGlyphs" opacity="0.8" stroke="#2a2c30" stroke-width="0.5">Opens</text>
<text x="996.3" y="627.7" font-family="Liberation Sans" font-size="12.5" font-weight="bold" fill="#ffffff" text-anchor="start" textLength="41" lengthAdjust="spacingAndGlyphs" stroke="#ffffff" stroke-width="0.35">Opens</text>
<rect x="1231.7" y="615.3" width="17" height="16.8" fill="url(#btng)" rx="3.5" stroke="#5a5d64" stroke-width="0.7"/>
<path d="M1235.6,623 h8 l-4,4z" fill="#555"/>
<rect x="1252.7" y="615.3" width="17" height="16.8" fill="url(#btng)" rx="3.5" stroke="#5a5d64" stroke-width="0.7"/>
<rect x="1257.5" y="625.9" width="8" height="1.6" fill="#6a6a60" />
<rect x="1273.7" y="615.3" width="17" height="16.8" fill="url(#btng)" rx="3.5" stroke="#5a5d64" stroke-width="0.7"/>
<path d="M1279,619.5 l7.2,7.5 M1286.2,619.5 l-7.2,7.5" stroke="#1a1f3a" stroke-width="1.2"/>
<rect x="993" y="638" width="300" height="301" fill="#8c8c8c" />
<rect x="994" y="638" width="298" height="300" fill="#ffffff" />
<text x="525.5" y="665.6" font-family="Liberation Sans" font-size="19" font-weight="bold" fill="#000" text-anchor="middle" textLength="125" lengthAdjust="spacingAndGlyphs" >Unsuccessful</text>
<path d="M434.50,678.5 V898.5 M444.50,678.5 V898.5 M454.50,678.5 V898.5 M464.50,678.5 V898.5 M474.50,678.5 V898.5 M484.50,678.5 V898.5 M495.50,678.5 V898.5 M505.50,678.5 V898.5 M515.50,678.5 V898.5 M525.50,678.5 V898.5 M535.50,678.5 V898.5 M545.50,678.5 V898.5 M555.50,678.5 V898.5 M566.50,678.5 V898.5 M576.50,678.5 V898.5 M586.50,678.5 V898.5 M596.50,678.5 V898.5 M606.50,678.5 V898.5 M616.50,678.5 V898.5 M627.50,678.5 V898.5 M424.5,678.5 H627.5 M424.5,722.5 H627.5 M424.5,766.5 H627.5 M424.5,810.5 H627.5 M424.5,854.5 H627.5" stroke="#dcdcdc" stroke-width="1" fill="none"/>
<rect x="434.8" y="890.9608695652174" width="59.60000000000001" height="7.539130434782608" fill="#00aaff" />
<rect x="495.8" y="894.8739130434783" width="59.5" height="3.626086956521739" fill="#00f500" />
<rect x="557" y="893.7869565217392" width="59" height="4.71304347826087" fill="#0000fa" />
<path d="M424.5,678.0 V898.5 H627.8 V902.0" stroke="#000" stroke-width="1.3" fill="none"/>
<path d="M421.3,678.5 H424.5 M421.3,700.5 H424.5 M421.3,722.5 H424.5 M421.3,744.5 H424.5 M421.3,766.5 H424.5 M421.3,788.5 H424.5 M421.3,810.5 H424.5 M421.3,832.5 H424.5 M421.3,854.5 H424.5 M421.3,876.5 H424.5" stroke="#000" stroke-width="1.2"/>
<text x="418.3" y="683.1" font-family="Liberation Sans" font-size="13.6" font-weight="normal" fill="#222" text-anchor="end" textLength="30" lengthAdjust="spacingAndGlyphs" >1,012</text>
<text x="418.3" y="727.1" font-family="Liberation Sans" font-size="13.6" font-weight="normal" fill="#222" text-anchor="end" textLength="19.8" lengthAdjust="spacingAndGlyphs" >810</text>
<text x="418.3" y="771.1" font-family="Liberation Sans" font-size="13.6" font-weight="normal" fill="#222" text-anchor="end" textLength="19.8" lengthAdjust="spacingAndGlyphs" >607</text>
<text x="418.3" y="815.1" font-family="Liberation Sans" font-size="13.6" font-weight="normal" fill="#222" text-anchor="end" textLength="19.8" lengthAdjust="spacingAndGlyphs" >405</text>
<text x="418.3" y="859.1" font-family="Liberation Sans" font-size="13.6" font-weight="normal" fill="#222" text-anchor="end" textLength="19.8" lengthAdjust="spacingAndGlyphs" >202</text>
<text x="457.8" y="912.7" font-family="Liberation Sans" font-size="14.2" font-weight="normal" fill="#222" text-anchor="middle" textLength="27.2" lengthAdjust="spacingAndGlyphs" >Total</text>
<text x="525.6" y="912.7" font-family="Liberation Sans" font-size="14.2" font-weight="normal" fill="#222" text-anchor="middle" textLength="77.1" lengthAdjust="spacingAndGlyphs" >All Segments</text>
<text x="593" y="912.7" font-family="Liberation Sans" font-size="14.2" font-weight="normal" fill="#222" text-anchor="middle" textLength="21.2" lengthAdjust="spacingAndGlyphs" >N/A</text>
<rect x="444.8" y="688.5" width="177.7" height="50" rx="2.5" fill="#fff" stroke="#6a6a6a" stroke-width="0.8"/>
<rect x="448.90000000000003" y="692.9" width="10" height="10.9" fill="#00aaff" />
<text x="464.0" y="702.9" font-family="Liberation Sans" font-size="14.2" font-weight="normal" fill="#222" text-anchor="start" textLength="102.5" lengthAdjust="spacingAndGlyphs" >Total: 31 (3.06 %)</text>
<rect x="448.90000000000003" y="707.9" width="10" height="10.9" fill="#00f500" />
<text x="464.0" y="717.9" font-family="Liberation Sans" font-size="14.2" font-weight="normal" fill="#222" text-anchor="start" textLength="151.9" lengthAdjust="spacingAndGlyphs" >All Segments: 13 (1.28 %)</text>
<rect x="448.90000000000003" y="722.9" width="10" height="10.9" fill="#0000fa" />
<text x="464.0" y="732.9" font-family="Liberation Sans" font-size="14.2" font-weight="normal" fill="#222" text-anchor="start" textLength="96.7" lengthAdjust="spacingAndGlyphs" >N/A: 18 (1.78 %)</text>
<text x="458.4" y="930.8" font-family="Liberation Sans" font-size="12.5" font-weight="normal" fill="#2f6f9f" text-anchor="start" textLength="90.7" lengthAdjust="spacingAndGlyphs" >Counts Report</text>
<rect x="458.4" y="932" width="90.7" height="1" fill="#2f6f9f" />
<text x="845.5" y="665.6" font-family="Liberation Sans" font-size="19" font-weight="bold" fill="#000" text-anchor="middle" textLength="80.8" lengthAdjust="spacingAndGlyphs" >Bounces</text>
<path d="M754.50,678.5 V898.5 M764.50,678.5 V898.5 M774.50,678.5 V898.5 M784.50,678.5 V898.5 M794.50,678.5 V898.5 M804.50,678.5 V898.5 M815.50,678.5 V898.5 M825.50,678.5 V898.5 M835.50,678.5 V898.5 M845.50,678.5 V898.5 M855.50,678.5 V898.5 M865.50,678.5 V898.5 M875.50,678.5 V898.5 M886.50,678.5 V898.5 M896.50,678.5 V898.5 M906.50,678.5 V898.5 M916.50,678.5 V898.5 M926.50,678.5 V898.5 M936.50,678.5 V898.5 M947.50,678.5 V898.5 M744.5,678.5 H947.5 M744.5,722.5 H947.5 M744.5,766.5 H947.5 M744.5,810.5 H947.5 M744.5,854.5 H947.5" stroke="#dcdcdc" stroke-width="1" fill="none"/>
<rect x="754.8" y="896.395652173913" width="59.60000000000001" height="2.104347826086957" fill="#00aaff" />
<rect x="877" y="896.395652173913" width="59" height="2.104347826086957" fill="#0000fa" />
<path d="M744.5,678.0 V898.5 H947.8 V902.0" stroke="#000" stroke-width="1.3" fill="none"/>
<path d="M741.3,678.5 H744.5 M741.3,700.5 H744.5 M741.3,722.5 H744.5 M741.3,744.5 H744.5 M741.3,766.5 H744.5 M741.3,788.5 H744.5 M741.3,810.5 H744.5 M741.3,832.5 H744.5 M741.3,854.5 H744.5 M741.3,876.5 H744.5" stroke="#000" stroke-width="1.2"/>
<text x="738.3" y="683.1" font-family="Liberation Sans" font-size="13.6" font-weight="normal" fill="#222" text-anchor="end" textLength="30" lengthAdjust="spacingAndGlyphs" >1,012</text>
<text x="738.3" y="727.1" font-family="Liberation Sans" font-size="13.6" font-weight="normal" fill="#222" text-anchor="end" textLength="19.8" lengthAdjust="spacingAndGlyphs" >810</text>
<text x="738.3" y="771.1" font-family="Liberation Sans" font-size="13.6" font-weight="normal" fill="#222" text-anchor="end" textLength="19.8" lengthAdjust="spacingAndGlyphs" >607</text>
<text x="738.3" y="815.1" font-family="Liberation Sans" font-size="13.6" font-weight="normal" fill="#222" text-anchor="end" textLength="19.8" lengthAdjust="spacingAndGlyphs" >405</text>
<text x="738.3" y="859.1" font-family="Liberation Sans" font-size="13.6" font-weight="normal" fill="#222" text-anchor="end" textLength="19.8" lengthAdjust="spacingAndGlyphs" >202</text>
<text x="777.8" y="912.7" font-family="Liberation Sans" font-size="14.2" font-weight="normal" fill="#222" text-anchor="middle" textLength="27.2" lengthAdjust="spacingAndGlyphs" >Total</text>
<text x="845.6" y="912.7" font-family="Liberation Sans" font-size="14.2" font-weight="normal" fill="#222" text-anchor="middle" textLength="77.1" lengthAdjust="spacingAndGlyphs" >All Segments</text>
<text x="913" y="912.7" font-family="Liberation Sans" font-size="14.2" font-weight="normal" fill="#222" text-anchor="middle" textLength="21.2" lengthAdjust="spacingAndGlyphs" >N/A</text>
<rect x="771.8" y="688.5" width="170.7" height="50" rx="2.5" fill="#fff" stroke="#6a6a6a" stroke-width="0.8"/>
<rect x="775.8999999999999" y="692.9" width="10" height="10.9" fill="#00aaff" />
<text x="790.9999999999999" y="702.9" font-family="Liberation Sans" font-size="14.2" font-weight="normal" fill="#222" text-anchor="start" textLength="95.2" lengthAdjust="spacingAndGlyphs" >Total: 6 (0.59 %)</text>
<rect x="775.8999999999999" y="707.9" width="10" height="10.9" fill="#00f500" />
<text x="790.9999999999999" y="717.9" font-family="Liberation Sans" font-size="14.2" font-weight="normal" fill="#222" text-anchor="start" textLength="144.7" lengthAdjust="spacingAndGlyphs" >All Segments: 0 (0.00 %)</text>
<rect x="775.8999999999999" y="722.9" width="10" height="10.9" fill="#0000fa" />
<text x="790.9999999999999" y="732.9" font-family="Liberation Sans" font-size="14.2" font-weight="normal" fill="#222" text-anchor="start" textLength="89.4" lengthAdjust="spacingAndGlyphs" >N/A: 6 (0.59 %)</text>
<text x="778.4" y="930.8" font-family="Liberation Sans" font-size="12.5" font-weight="normal" fill="#2f6f9f" text-anchor="start" textLength="90.7" lengthAdjust="spacingAndGlyphs" >Counts Report</text>
<rect x="778.4" y="932" width="90.7" height="1" fill="#2f6f9f" />
<text x="1165.5" y="665.6" font-family="Liberation Sans" font-size="19" font-weight="bold" fill="#000" text-anchor="middle" textLength="59.5" lengthAdjust="spacingAndGlyphs" >Opens</text>
<path d="M1074.50,678.5 V898.5 M1084.50,678.5 V898.5 M1094.50,678.5 V898.5 M1104.50,678.5 V898.5 M1114.50,678.5 V898.5 M1124.50,678.5 V898.5 M1135.50,678.5 V898.5 M1145.50,678.5 V898.5 M1155.50,678.5 V898.5 M1165.50,678.5 V898.5 M1175.50,678.5 V898.5 M1185.50,678.5 V898.5 M1195.50,678.5 V898.5 M1206.50,678.5 V898.5 M1216.50,678.5 V898.5 M1226.50,678.5 V898.5 M1236.50,678.5 V898.5 M1246.50,678.5 V898.5 M1256.50,678.5 V898.5 M1267.50,678.5 V898.5 M1064.5,678.5 H1267.5 M1064.5,722.5 H1267.5 M1064.5,766.5 H1267.5 M1064.5,810.5 H1267.5 M1064.5,854.5 H1267.5" stroke="#dcdcdc" stroke-width="1" fill="none"/>
<rect x="1074.8" y="888.1347826086957" width="59.60000000000001" height="10.365217391304348" fill="#00aaff" />
<rect x="1135.8" y="892.4826086956522" width="59.5" height="6.017391304347826" fill="#00f500" />
<rect x="1197" y="893.3521739130434" width="59" height="5.147826086956521" fill="#0000fa" />
<path d="M1064.5,678.0 V898.5 H1267.8 V902.0" stroke="#000" stroke-width="1.3" fill="none"/>
<path d="M1061.3,678.5 H1064.5 M1061.3,700.5 H1064.5 M1061.3,722.5 H1064.5 M1061.3,744.5 H1064.5 M1061.3,766.5 H1064.5 M1061.3,788.5 H1064.5 M1061.3,810.5 H1064.5 M1061.3,832.5 H1064.5 M1061.3,854.5 H1064.5 M1061.3,876.5 H1064.5" stroke="#000" stroke-width="1.2"/>
<text x="1058.3" y="683.1" font-family="Liberation Sans" font-size="13.6" font-weight="normal" fill="#222" text-anchor="end" textLength="30" lengthAdjust="spacingAndGlyphs" >1,012</text>
<text x="1058.3" y="727.1" font-family="Liberation Sans" font-size="13.6" font-weight="normal" fill="#222" text-anchor="end" textLength="19.8" lengthAdjust="spacingAndGlyphs" >810</text>
<text x="1058.3" y="771.1" font-family="Liberation Sans" font-size="13.6" font-weight="normal" fill="#222" text-anchor="end" textLength="19.8" lengthAdjust="spacingAndGlyphs" >607</text>
<text x="1058.3" y="815.1" font-family="Liberation Sans" font-size="13.6" font-weight="normal" fill="#222" text-anchor="end" textLength="19.8" lengthAdjust="spacingAndGlyphs" >405</text>
<text x="1058.3" y="859.1" font-family="Liberation Sans" font-size="13.6" font-weight="normal" fill="#222" text-anchor="end" textLength="19.8" lengthAdjust="spacingAndGlyphs" >202</text>
<text x="1097.8" y="912.7" font-family="Liberation Sans" font-size="14.2" font-weight="normal" fill="#222" text-anchor="middle" textLength="27.2" lengthAdjust="spacingAndGlyphs" >Total</text>
<text x="1165.6" y="912.7" font-family="Liberation Sans" font-size="14.2" font-weight="normal" fill="#222" text-anchor="middle" textLength="77.1" lengthAdjust="spacingAndGlyphs" >All Segments</text>
<text x="1233" y="912.7" font-family="Liberation Sans" font-size="14.2" font-weight="normal" fill="#222" text-anchor="middle" textLength="21.2" lengthAdjust="spacingAndGlyphs" >N/A</text>
<rect x="1084.8" y="688.5" width="177.7" height="50" rx="2.5" fill="#fff" stroke="#6a6a6a" stroke-width="0.8"/>
<rect x="1088.8999999999999" y="692.9" width="10" height="10.9" fill="#00aaff" />
<text x="1104.0" y="702.9" font-family="Liberation Sans" font-size="14.2" font-weight="normal" fill="#222" text-anchor="start" textLength="102.5" lengthAdjust="spacingAndGlyphs" >Total: 44 (4.35 %)</text>
<rect x="1088.8999999999999" y="707.9" width="10" height="10.9" fill="#00f500" />
<text x="1104.0" y="717.9" font-family="Liberation Sans" font-size="14.2" font-weight="normal" fill="#222" text-anchor="start" textLength="151.9" lengthAdjust="spacingAndGlyphs" >All Segments: 24 (2.37 %)</text>
<rect x="1088.8999999999999" y="722.9" width="10" height="10.9" fill="#0000fa" />
<text x="1104.0" y="732.9" font-family="Liberation Sans" font-size="14.2" font-weight="normal" fill="#222" text-anchor="start" textLength="96.7" lengthAdjust="spacingAndGlyphs" >N/A: 20 (1.98 %)</text>
<text x="1098.4" y="930.8" font-family="Liberation Sans" font-size="12.5" font-weight="normal" fill="#2f6f9f" text-anchor="start" textLength="90.7" lengthAdjust="spacingAndGlyphs" >Counts Report</text>
<rect x="1098.4" y="932" width="90.7" height="1" fill="#2f6f9f" />
<rect x="434.4" y="349.0" width="60.3" height="213" fill="#ffffff" opacity="0.7"/>
<defs><filter id="tsh" x="-10%" y="-30%" width="120%" height="180%"><feGaussianBlur stdDeviation="1.5"/></filter></defs>
<path d="M400,729 h131 a3,3 0 0 1 3,3 v11 a3,3 0 0 1 -3,3 h-62 l-4,4 l-4,-4 h-61 a3,3 0 0 1 -3,-3 v-11 a3,3 0 0 1 3,-3z" fill="#000" opacity="0.18" filter="url(#tsh)"/>
<path d="M400,727.2 h128.6 a3,3 0 0 1 3,3 v10.4 a3,3 0 0 1 -3,3 h-59.6 l-4,4 l-4,-4 h-61 a3,3 0 0 1 -3,-3 v-10.4 a3,3 0 0 1 3,-3z" fill="#fcfcee" stroke="#c9c9b5" stroke-width="1"/>
<text x="400.7" y="739.6" font-family="Liberation Sans" font-size="12.5" font-weight="normal" fill="#111" text-anchor="start" textLength="120" lengthAdjust="spacingAndGlyphs" >Total: 981 (96.94 %)</text>
<rect x="353" y="949" width="300" height="25" fill="url(#stripes)" />
<rect x="353" y="949" width="300" height="1" fill="#6a6d74" />
<rect x="353" y="968" width="300" height="4" fill="#50545c" />
<rect x="353" y="972" width="300" height="1" fill="#7d8087" />
<rect x="353" y="973" width="300" height="1" fill="#8a8d93" />
<text x="357" y="964.7" font-family="Liberation Sans" font-size="12.5" font-weight="bold" fill="#2a2c30" text-anchor="start" textLength="158" lengthAdjust="spacingAndGlyphs" opacity="0.8" stroke="#2a2c30" stroke-width="0.5">Spam FBL Unsubscribes</text>
<text x="356.3" y="963.7" font-family="Liberation Sans" font-size="12.5" font-weight="bold" fill="#ffffff" text-anchor="start" textLength="158" lengthAdjust="spacingAndGlyphs" stroke="#ffffff" stroke-width="0.35">Spam FBL Unsubscribes</text>
<rect x="591.7" y="951.3" width="17" height="16.8" fill="url(#btng)" rx="3.5" stroke="#5a5d64" stroke-width="0.7"/>
<path d="M595.6,959 h8 l-4,4z" fill="#555"/>
<rect x="612.7" y="951.3" width="17" height="16.8" fill="url(#btng)" rx="3.5" stroke="#5a5d64" stroke-width="0.7"/>
<rect x="617.5" y="961.9" width="8" height="1.6" fill="#6a6a60" />
<rect x="633.7" y="951.3" width="17" height="16.8" fill="url(#btng)" rx="3.5" stroke="#5a5d64" stroke-width="0.7"/>
<path d="M639,955.5 l7.2,7.5 M646.2,955.5 l-7.2,7.5" stroke="#1a1f3a" stroke-width="1.2"/>
<rect x="353" y="974" width="300" height="41" fill="#8c8c8c" />
<rect x="354" y="974" width="298" height="40" fill="#ffffff" />
<rect x="673" y="949" width="300" height="25" fill="url(#stripes)" />
<rect x="673" y="949" width="300" height="1" fill="#6a6d74" />
<rect x="673" y="968" width="300" height="4" fill="#50545c" />
<rect x="673" y="972" width="300" height="1" fill="#7d8087" />
<rect x="673" y="973" width="300" height="1" fill="#8a8d93" />
<text x="677" y="964.7" font-family="Liberation Sans" font-size="12.5" font-weight="bold" fill="#2a2c30" text-anchor="start" textLength="142" lengthAdjust="spacingAndGlyphs" opacity="0.8" stroke="#2a2c30" stroke-width="0.5">User Agent for Opens</text>
<text x="676.3" y="963.7" font-family="Liberation Sans" font-size="12.5" font-weight="bold" fill="#ffffff" text-anchor="start" textLength="142" lengthAdjust="spacingAndGlyphs" stroke="#ffffff" stroke-width="0.35">User Agent for Opens</text>
<rect x="911.7" y="951.3" width="17" height="16.8" fill="url(#btng)" rx="3.5" stroke="#5a5d64" stroke-width="0.7"/>
<path d="M915.6,959 h8 l-4,4z" fill="#555"/>
<rect x="932.7" y="951.3" width="17" height="16.8" fill="url(#btng)" rx="3.5" stroke="#5a5d64" stroke-width="0.7"/>
<rect x="937.5" y="961.9" width="8" height="1.6" fill="#6a6a60" />
<rect x="953.7" y="951.3" width="17" height="16.8" fill="url(#btng)" rx="3.5" stroke="#5a5d64" stroke-width="0.7"/>
<path d="M959,955.5 l7.2,7.5 M966.2,955.5 l-7.2,7.5" stroke="#1a1f3a" stroke-width="1.2"/>
<rect x="673" y="974" width="300" height="41" fill="#8c8c8c" />
<rect x="674" y="974" width="298" height="40" fill="#ffffff" />
<rect x="718.5" y="978.5" width="210" height="12" fill="#fff" stroke="#a5acb5" stroke-width="1"/>
<rect x="911.5" y="979.5" width="17" height="12" fill="#ececec" stroke="#707070" stroke-width="1"/>
<rect x="0" y="981.2" width="1640" height="1.8" fill="#7c7c7c" />
</svg>
</body></html>
